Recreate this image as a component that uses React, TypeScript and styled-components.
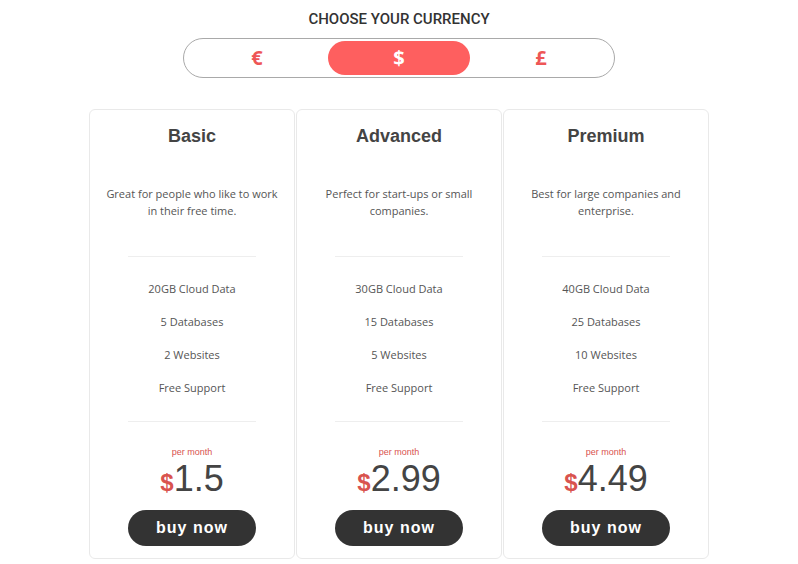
import styled, { createGlobalStyle } from "styled-components";
import { useState } from "react";

interface PlanType {
  name: string;
  description: string;
  features: string[];
  prices: { [key: string]: string };
}

const plans: PlanType[] = [
  {
    name: "Basic",
    description: "Great for people who like to work in their free time.",
    features: ["20GB Cloud Data", "5 Databases", "2 Websites", "Free Support"],
    prices: { "€": "1.3", $: "1.5", "£": "1.1" },
  },
  {
    name: "Advanced",
    description: "Perfect for start-ups or small companies.",
    features: ["30GB Cloud Data", "15 Databases", "5 Websites", "Free Support"],
    prices: { "€": "2.6", $: "2.99", "£": "2.3" },
  },
  {
    name: "Premium",
    description: "Best for large companies and enterprise.",
    features: ["40GB Cloud Data", "25 Databases", "10 Websites", "Free Support"],
    prices: { "€": "3.9", $: "4.49", "£": "3.5" },
  },
];

const currencies = ["€", "$", "£"];

const App = () => {
  const [currency, setCurrency] = useState("$");

  return (
    <>
      <GlobalStyle />
      <Page>
        <Heading>CHOOSE YOUR CURRENCY</Heading>
        <Toggle>
          {currencies.map(c => (
            <ToggleButton key={c} $active={c === currency} onClick={() => setCurrency(c)}>
              {c}
            </ToggleButton>
          ))}
        </Toggle>
        <CardList>
          {plans.map(plan => (
            <Card key={plan.name}>
              <CardTitle>{plan.name}</CardTitle>
              <CardDescription>{plan.description}</CardDescription>
              <Divider $gap={27} />
              <FeatureList>
                {plan.features.map(feature => (
                  <Feature key={feature}>{feature}</Feature>
                ))}
              </FeatureList>
              <Divider $gap={25} />
              <PerMonth>per month</PerMonth>
              <Price>
                <Symbol>{currency}</Symbol>
                {plan.prices[currency]}
              </Price>
              <BuyButton>buy now</BuyButton>
            </Card>
          ))}
        </CardList>
      </Page>
    </>
  );
};

const GlobalStyle = createGlobalStyle`
  body {
    margin: 0;
    background: #ffffff;
    font-family: "Open Sans", sans-serif;
  }
`;

const Page = styled.div`
  display: flex;
  flex-direction: column;
  align-items: center;
  padding-top: 10px;
`;

const Heading = styled.h2`
  margin: 0;
  font-family: Roboto, sans-serif;
  font-weight: 500;
  font-size: 15px;
  line-height: 19px;
  color: #333333;
`;

const Toggle = styled.div`
  margin-top: 9px;
  width: 432px;
  height: 40px;
  box-sizing: border-box;
  border: 1px solid #a9a9a9;
  border-radius: 20px;
  padding: 2px;
  display: grid;
  grid-template-columns: 1fr 1fr 1fr;
`;

const ToggleButton = styled.button<{ $active: boolean }>`
  border: none;
  border-radius: 17px;
  cursor: pointer;
  font-family: "Open Sans", sans-serif;
  font-weight: 700;
  font-size: 20px;
  line-height: 1;
  padding: 0;
  background: ${({ $active }) => ($active ? "#fe5f5f" : "transparent")};
  color: ${({ $active }) => ($active ? "#ffffff" : "#ee5656")};
`;

const CardList = styled.div`
  margin-top: 31px;
  display: flex;
  gap: 1px;
`;

const Card = styled.div`
  width: 206px;
  height: 450px;
  box-sizing: border-box;
  border: 1px solid #e9e9e9;
  border-radius: 6px;
  display: flex;
  flex-direction: column;
  align-items: center;
  padding-top: 15px;
`;

const CardTitle = styled.h3`
  margin: 0;
  font-family: "Liberation Sans", Arial, sans-serif;
  font-weight: 700;
  font-size: 18px;
  line-height: 22px;
  color: #444444;
`;

const CardDescription = styled.p`
  margin: 38px 0 0;
  padding: 0 14px;
  text-align: center;
  font-size: 11px;
  line-height: 17px;
  color: #555555;
  height: 44px;
`;

const Divider = styled.hr<{ $gap: number }>`
  margin: ${({ $gap }) => $gap}px 0 0;
  width: 128px;
  border: none;
  border-top: 1px solid #eeeeee;
`;

const FeatureList = styled.ul`
  margin: 23px 0 0;
  padding: 0;
  list-style: none;
  display: flex;
  flex-direction: column;
  align-items: center;
  gap: 16px;
`;

const Feature = styled.li`
  font-size: 11px;
  line-height: 17px;
  color: #555555;
`;

const PerMonth = styled.div`
  margin-top: 24px;
  font-family: "Liberation Sans", Arial, sans-serif;
  font-size: 9px;
  line-height: 12px;
  color: #d9534f;
`;

const Price = styled.div`
  margin-top: 3px;
  font-family: "Liberation Sans", Arial, sans-serif;
  font-size: 36px;
  line-height: 36px;
  color: #444444;
  display: flex;
  align-items: baseline;
`;

const Symbol = styled.span`
  font-weight: 700;
  font-size: 24px;
  color: #d9534f;
`;

const BuyButton = styled.button`
  margin-top: 9px;
  width: 128px;
  height: 36px;
  border: none;
  border-radius: 18px;
  background: #333333;
  color: #ffffff;
  font-family: "Liberation Sans", Arial, sans-serif;
  font-weight: 700;
  font-size: 16px;
  letter-spacing: 1px;
  cursor: pointer;
`;

export default App;
